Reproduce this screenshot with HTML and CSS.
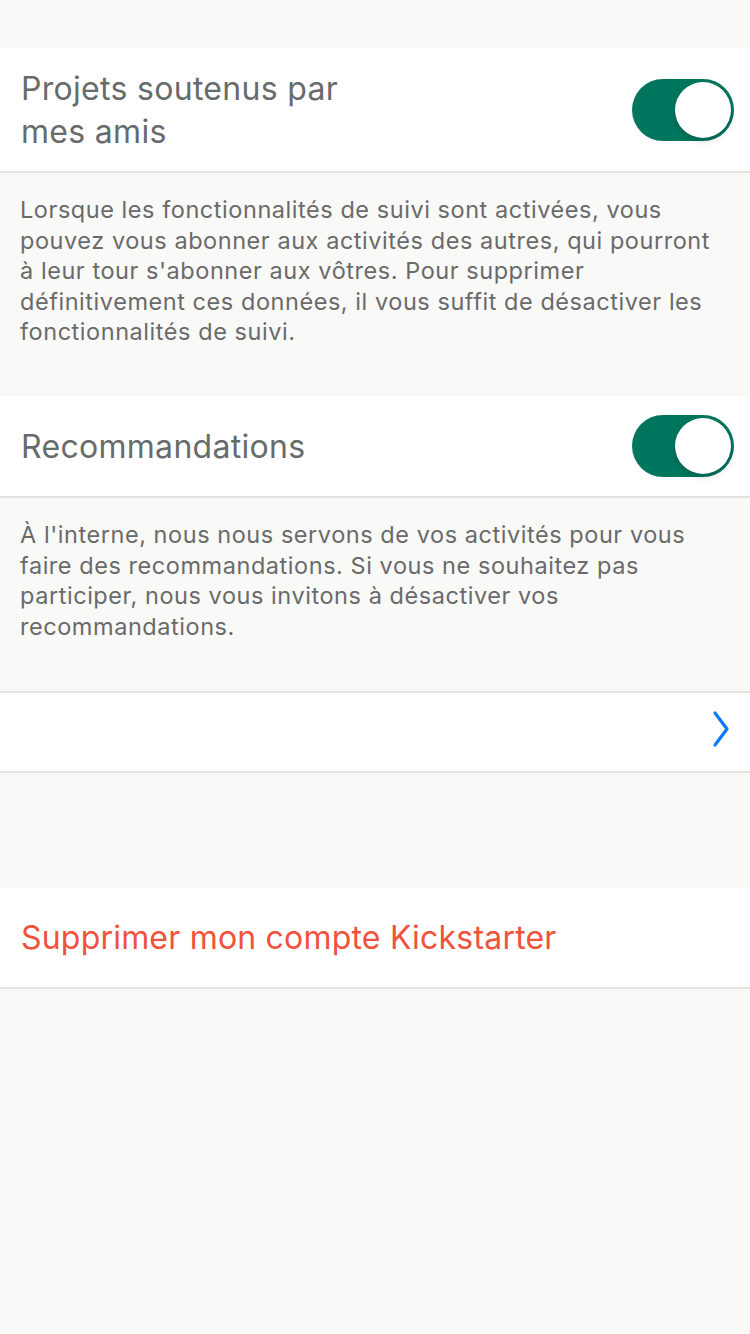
FILE: index.html
```html
<!DOCTYPE html>
<html lang="fr">
<head>
<meta charset="utf-8">
<link rel="stylesheet" href="styles.css">
</head>
<body>
<div class="page">
  <div class="gap-top"></div>
  <div class="row row-tall">
    <div class="label">Projets soutenus par<br>mes amis</div>
    <div class="toggle"><div class="knob"></div></div>
  </div>
  <div class="note note-1">Lorsque les fonctionnalités de suivi sont activées, vous pouvez vous abonner aux activités des autres, qui pourront à leur tour s'abonner aux vôtres. Pour supprimer définitivement ces données, il vous suffit de désactiver les fonctionnalités de suivi.</div>
  <div class="row row-mid">
    <div class="label">Recommandations</div>
    <div class="toggle"><div class="knob"></div></div>
  </div>
  <div class="note note-2">À l'interne, nous nous servons de vos activités pour vous faire des recommandations. Si vous ne souhaitez pas participer, nous vous invitons à désactiver vos recommandations.</div>
  <div class="row row-link">
    <svg class="chevron" width="18" height="38" viewBox="0 0 18 38"><path d="M3 3 L15 19 L3 35" fill="none" stroke="#0a7aff" stroke-width="3.2" stroke-linecap="round" stroke-linejoin="round"/></svg>
  </div>
  <div class="gap-mid"></div>
  <div class="row row-danger">
    <div class="danger">Supprimer mon compte Kickstarter</div>
  </div>
</div>
</body>
</html>
```
FILE: styles.css
```css
html, body {
  margin: 0;
  padding: 0;
  background: #f9f9f8;
}
.page {
  font-family: "Inter", "Roboto", "Liberation Sans", sans-serif;
  width: 750px;
  min-height: 1334px;
  background: #f9f9f8;
}
.gap-top { height: 48px; }
.gap-mid { height: 115px; }
.row {
  background: #ffffff;
  border-bottom: 2px solid #e3e3e3;
  display: flex;
  align-items: center;
  justify-content: space-between;
  padding: 0 16px 0 21px;
  box-sizing: content-box;
}
.row-tall { height: 123px; }
.row-mid { height: 100px; }
.row-link {
  height: 78px;
  border-top: 2px solid #e3e3e3;
  justify-content: flex-end;
  padding-right: 20px;
}
.row-danger { height: 99px; }
.label {
  font-size: 32px;
  line-height: 43px;
  color: #676b6b;
  letter-spacing: 0.3px;
}
.danger {
  font-size: 32px;
  color: #f1523c;
  letter-spacing: 0.2px;
}
.toggle {
  width: 102px;
  height: 62px;
  border-radius: 31px;
  background: #00765f;
  position: relative;
  flex-shrink: 0;
}
.knob {
  position: absolute;
  top: 3px;
  right: 3px;
  width: 56px;
  height: 56px;
  border-radius: 50%;
  background: #ffffff;
  box-shadow: 0 3px 6px rgba(0,0,0,0.18), 0 0 1px rgba(0,0,0,0.2);
}
.note {
  font-size: 23.5px;
  line-height: 30.5px;
  color: #6a6a6a;
  padding: 22px 20px 0 20px;
  box-sizing: border-box;
  letter-spacing: 0.55px;
}
.note-1 { height: 223px; }
.note-2 { height: 193px; }
.chevron { display: block; margin-bottom: 6px; }
```
